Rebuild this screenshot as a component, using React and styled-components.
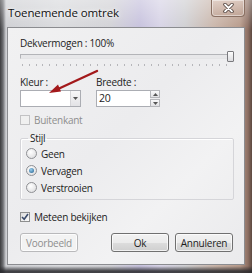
import React from 'react'
import styled, { createGlobalStyle } from 'styled-components'

const Global = createGlobalStyle`
  html, body { margin: 0; padding: 0; }
  body {
    width: 252px;
    height: 273px;
    overflow: hidden;
    font-family: "Open Sans", "Noto Sans", sans-serif;
    font-size: 10px;
    letter-spacing: -0.25px;
    color: #1c1c1c;
  }
`

const Frame = styled.div`
  position: relative;
  width: 252px;
  height: 273px;
  box-sizing: border-box;
  display: flex;
  flex-direction: column;
  background:
    linear-gradient(180deg, rgba(255,255,255,0.35) 0px, rgba(255,255,255,0) 30px, rgba(0,0,0,0) 266px, rgba(40,40,44,0.85) 271px),
    linear-gradient(90deg,
      #3c3c3e 0px, #6d6e72 3px, #cfd0d4 6px, #d9dadd 60px, #d2d2d6 110px,
      #c6c1dd 140px, #d7d3e6 160px, #cfcfd2 185px, #c9b4a8 215px,
      #b79a8a 240px, #8c6e62 248px, #5b4840 252px);
`

const TitleBar = styled.div`
  height: 27px;
  display: flex;
  align-items: flex-start;
  justify-content: space-between;
  padding: 0 8px 0 8px;
  box-sizing: border-box;
`

const Title = styled.span`
  margin-top: 5px;
  font-size: 11.5px;
  line-height: 16px;
  letter-spacing: -0.1px;
  color: #111;
  text-shadow: 0 0 6px rgba(255,255,255,0.9), 0 0 3px rgba(255,255,255,0.9);
`

const CloseButton = styled.div`
  width: 34px;
  height: 17px;
  margin-right: -1px;
  box-sizing: border-box;
  border: 1px solid #8a7063;
  border-top: none;
  border-radius: 0 0 4px 4px;
  background: linear-gradient(180deg, rgba(230,210,200,0.55), rgba(190,160,145,0.55));
  box-shadow: inset 0 0 0 1px rgba(255,255,255,0.45);
  display: flex;
  align-items: center;
  justify-content: center;
`

const Client = styled.div`
  flex: 1;
  margin: 0 7px 8px 7px;
  border: 1px solid #8b8c90;
  background: linear-gradient(135deg, #f1f1f2 0%, #ececee 45%, #f2f2f3 70%, #eaeaec 100%);
  display: flex;
  flex-direction: column;
  padding: 8px 10px 0 12px;
`

const Caption = styled.div`
  height: 14px;
  line-height: 14px;
  color: ${p => (p.disabled ? '#8e8e8e' : '#1c1c1c')};
`

const SliderBox = styled.div`
  position: relative;
  height: 18px;
`

const Track = styled.div`
  position: absolute;
  left: 0;
  right: 0;
  top: 4px;
  height: 3px;
  border: 1px solid #b3b4b8;
  border-bottom-color: #e4e4e6;
  background: #e7e7e9;
`

const Thumb = styled.div`
  position: absolute;
  right: 0;
  top: 1px;
  width: 5px;
  height: 9px;
  border: 1px solid #7a7a7e;
  border-radius: 1px;
  background: linear-gradient(180deg, #fdfdfd, #dcdcdf);
`

const Ticks = styled.div`
  position: absolute;
  left: 2px;
  right: 2px;
  top: 14px;
  height: 2px;
  background: repeating-linear-gradient(90deg, #b6b6ba 0px, #b6b6ba 1px, transparent 1px, transparent 6.8px);
`

const FieldRow = styled.div`
  display: flex;
  gap: 15px;
  margin-top: ${p => p.top || 0}px;
`

const Field = styled.div`
  display: flex;
  flex-direction: column;
  gap: 1px;
  width: ${p => p.width}px;
`

const Combo = styled.div`
  height: 17px;
  box-sizing: border-box;
  border: 1px solid #abadb3;
  background: #fff;
  display: flex;
  justify-content: flex-end;
`

const DropButton = styled.div`
  width: 9px;
  border-left: 1px solid #d5d5d8;
  background: linear-gradient(180deg, #f7f7f8, #e3e3e6);
  display: flex;
  align-items: center;
  justify-content: center;
`

const Spin = styled.div`
  height: 17px;
  display: flex;
`

const SpinEdit = styled.div`
  flex: 1;
  box-sizing: border-box;
  border: 1px solid #abadb3;
  border-right: none;
  background: #fff;
  padding-left: 2px;
  line-height: 15px;
  font-size: 10.5px;
`

const SpinButtons = styled.div`
  width: 10px;
  display: flex;
  flex-direction: column;
  gap: 1px;
`

const SpinButton = styled.div`
  flex: 1;
  box-sizing: border-box;
  border: 1px solid #b5b6ba;
  background: linear-gradient(180deg, #f9f9fa, #e1e1e4);
  display: flex;
  align-items: center;
  justify-content: center;
`

const CheckRow = styled.label`
  display: flex;
  align-items: center;
  gap: 4px;
  height: ${p => p.h || 14}px;
  margin-top: ${p => p.top || 0}px;
  color: ${p => (p.disabled ? '#8e8e8e' : '#1c1c1c')};
`

const Box = styled.span`
  width: 10px;
  height: 10px;
  box-sizing: border-box;
  border: 1px solid ${p => (p.disabled ? '#c2c2c4' : '#8e8f8f')};
  background: ${p => (p.disabled ? '#f0f0f0' : 'linear-gradient(135deg, #dcdcdc, #fbfbfb)')};
  display: flex;
  align-items: center;
  justify-content: center;
`

const Group = styled.fieldset`
  margin: 5px 0 0 0;
  padding: 0 0 3px 5px;
  border: 1px solid #d5d5d9;
  border-radius: 2px;
  box-shadow: inset 1px 1px 0 #fff;
`

const Legend = styled.legend`
  padding: 0 2px;
  margin-left: 2px;
  line-height: 14px;
`

const Radio = styled.span`
  width: 11px;
  height: 11px;
  box-sizing: border-box;
  border-radius: 50%;
  border: 1px solid #8f9094;
  background: radial-gradient(circle at 40% 35%, #ffffff, #d8d8da);
  display: flex;
  align-items: center;
  justify-content: center;
  &::after {
    content: '';
    display: ${p => (p.checked ? 'block' : 'none')};
    width: 5px;
    height: 5px;
    border-radius: 50%;
    background: radial-gradient(circle at 40% 35%, #9bd0f0, #1c5a88);
  }
`

const ButtonRow = styled.div`
  display: flex;
  justify-content: space-between;
  margin-top: 9px;
  padding-right: 1px;
`

const ButtonGroup = styled.div`
  display: flex;
  gap: 6px;
`

const Button = styled.div`
  width: 58px;
  height: 19px;
  box-sizing: border-box;
  border: 1px solid ${p => (p.disabled ? '#b9b9bb' : '#707070')};
  border-radius: 3px;
  background: ${p => (p.disabled
    ? '#f3f3f3'
    : 'linear-gradient(180deg, #f2f2f2 0%, #ebebeb 50%, #dddddd 51%, #cfcfcf 100%)')};
  box-shadow: inset 0 0 0 1px rgba(255,255,255,0.7);
  color: ${p => (p.disabled ? '#8e8e8e' : '#1c1c1c')};
  display: flex;
  align-items: center;
  justify-content: center;
  line-height: 14px;
`

const Arrow = styled.svg`
  position: absolute;
  left: 0;
  top: 0;
  pointer-events: none;
`

const radios = [
  { label: 'Geen', checked: false },
  { label: 'Vervagen', checked: true },
  { label: 'Verstrooien', checked: false }
]

const App = () =>
  <Frame>
    <Global />
    <TitleBar>
      <Title>Toenemende omtrek</Title>
      <CloseButton>
        <svg width="11" height="10" viewBox="0 0 11 10">
          <path d="M2 1.5 L9 8.5 M9 1.5 L2 8.5" stroke="#4a3a34" strokeWidth="3.4" strokeLinecap="round" />
          <path d="M2 1.5 L9 8.5 M9 1.5 L2 8.5" stroke="#fff" strokeWidth="1.8" strokeLinecap="round" />
        </svg>
      </CloseButton>
    </TitleBar>
    <Client>
      <Caption>Dekvermogen : 100%</Caption>
      <SliderBox>
        <Track />
        <Ticks />
        <Thumb />
      </SliderBox>
      <FieldRow top={7}>
        <Field width={61}>
          <Caption>Kleur :</Caption>
          <Combo>
            <DropButton>
              <svg width="5" height="3" viewBox="0 0 5 3"><path d="M0 0 H5 L2.5 3 Z" fill="#555" /></svg>
            </DropButton>
          </Combo>
        </Field>
        <Field width={64}>
          <Caption>Breedte :</Caption>
          <Spin>
            <SpinEdit>20</SpinEdit>
            <SpinButtons>
              <SpinButton>
                <svg width="5" height="3" viewBox="0 0 5 3"><path d="M0 3 H5 L2.5 0 Z" fill="#555" /></svg>
              </SpinButton>
              <SpinButton>
                <svg width="5" height="3" viewBox="0 0 5 3"><path d="M0 0 H5 L2.5 3 Z" fill="#555" /></svg>
              </SpinButton>
            </SpinButtons>
          </Spin>
        </Field>
      </FieldRow>
      <CheckRow top={6} h={13} disabled>
        <Box disabled />
        Buitenkant
      </CheckRow>
      <Group>
        <Legend>Stijl</Legend>
        {radios.map(r =>
          <CheckRow key={r.label} h={17}>
            <Radio checked={r.checked} />
            {r.label}
          </CheckRow>
        )}
      </Group>
      <CheckRow top={10}>
        <Box>
          <svg width="8" height="8" viewBox="0 0 8 8">
            <path d="M1 4 L3.2 6.3 L7 1" fill="none" stroke="#3a4a6a" strokeWidth="1.6" />
          </svg>
        </Box>
        Meteen bekijken
      </CheckRow>
      <ButtonRow>
        <Button disabled>Voorbeeld</Button>
        <ButtonGroup>
          <Button>Ok</Button>
          <Button>Annuleren</Button>
        </ButtonGroup>
      </ButtonRow>
    </Client>
    <Arrow width="252" height="273">
      <line x1="97" y1="71" x2="58" y2="89" stroke="#a3191b" strokeWidth="2.4" strokeLinecap="round" />
      <path d="M49 93 L58 84.5 L61 91.5 Z" fill="#a3191b" />
    </Arrow>
  </Frame>

export default App
